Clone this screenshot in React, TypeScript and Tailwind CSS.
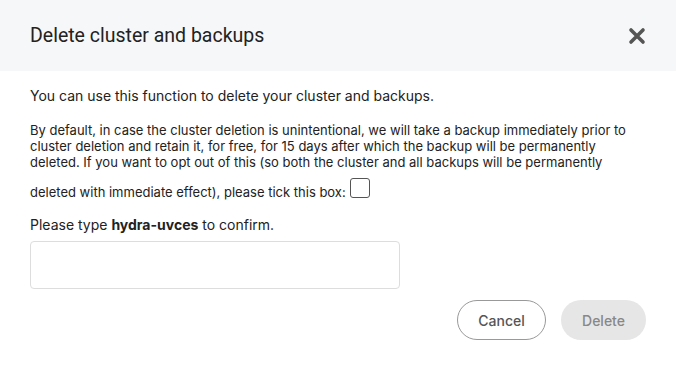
const CloseIcon = () => (
  <svg width="18" height="18" viewBox="0 0 18 18" className="text-[#555]">
    <path d="M3 3 L15 15 M15 3 L3 15" stroke="currentColor" strokeWidth="3.6" strokeLinecap="round" fill="none" />
  </svg>
);

const App = () => {
  return (
    <div className="w-[676px] h-[365px] bg-white flex flex-col font-['Inter',sans-serif] text-[#222]">
      <div className="h-[71px] bg-[#f6f7f9] flex items-center justify-between pl-[30px] pr-[30px]">
        <span className="text-[19.5px] font-['Roboto',sans-serif] text-[#222]">Delete cluster and backups</span>
        <CloseIcon />
      </div>
      <div className="px-[30px] pt-[16px]">
        <p className="text-[14px] leading-[18px]">You can use this function to delete your cluster and backups.</p>
        <p className="text-[13px] leading-[16px] mt-[17px]">
          By default, in case the cluster deletion is unintentional, we will take a backup immediately prior to
          cluster deletion and retain it, for free, for 15 days after which the backup will be permanently
          deleted. If you want to opt out of this (so both the cluster and all backups will be permanently
          deleted with immediate effect), please tick this box:{' '}
          <span className="inline-block w-[20px] h-[20px] border border-[#555] rounded-[3px] align-baseline mt-[8px] -mb-[1px] ml-[1px]" />
        </p>
        <p className="text-[14px] leading-[18px] mt-[16px]">
          Please type <span className="font-bold">hydra-uvces</span> to confirm.
        </p>
        <input className="mt-[7px] w-[370px] h-[48px] border border-[#ddd] rounded-[4px] outline-none" />
        <div className="flex justify-end gap-[15px] mt-[11px]">
          <button className="w-[89px] h-[40px] rounded-full border border-[#999] text-[14px] font-medium text-[#555]">
            Cancel
          </button>
          <button className="w-[85px] h-[40px] rounded-full bg-[#e6e6e6] text-[14px] font-medium text-[#888]">
            Delete
          </button>
        </div>
      </div>
    </div>
  );
};

export default App;
